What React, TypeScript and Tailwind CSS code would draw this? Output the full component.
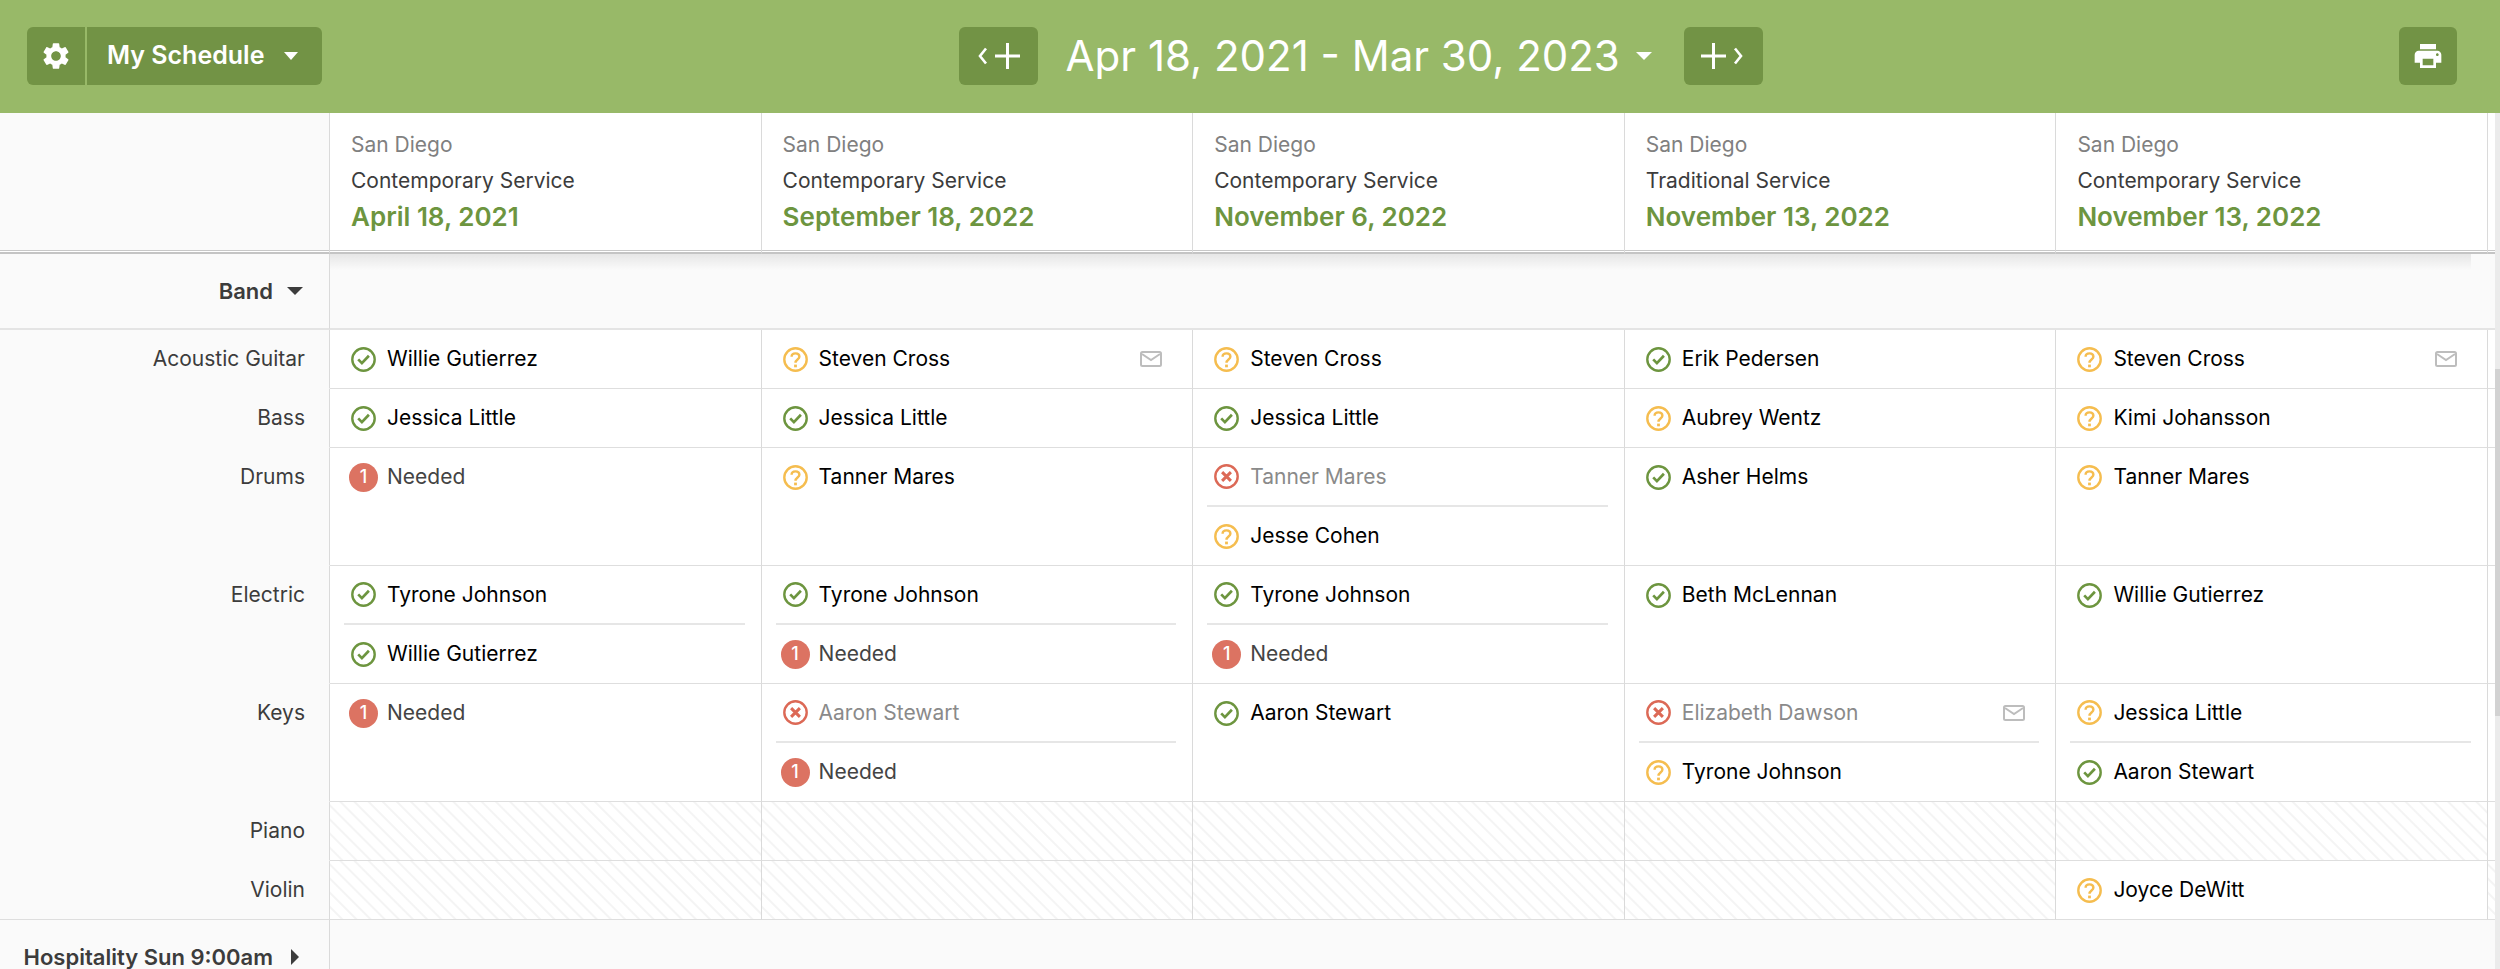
import type { ReactNode } from "react";
import { MdPrint, MdSettings } from "react-icons/md";

type Status = "confirmed" | "pending" | "declined" | "needed";

type Assignment = {
  status: Status;
  name: string;
  mail?: boolean;
};

type Position = {
  label: string;
  cells: Assignment[][];
  unusedNext?: boolean;
};

const yes = (name: string): Assignment => ({ status: "confirmed", name });
const maybe = (name: string, mail = false): Assignment => ({ status: "pending", name, mail });
const no = (name: string, mail = false): Assignment => ({ status: "declined", name, mail });
const needed: Assignment = { status: "needed", name: "Needed" };

const plans = [
  { campus: "San Diego", service: "Contemporary Service", date: "April 18, 2021" },
  { campus: "San Diego", service: "Contemporary Service", date: "September 18, 2022" },
  { campus: "San Diego", service: "Contemporary Service", date: "November 6, 2022" },
  { campus: "San Diego", service: "Traditional Service", date: "November 13, 2022" },
  { campus: "San Diego", service: "Contemporary Service", date: "November 13, 2022" },
];

const positions: Position[] = [
  {
    label: "Acoustic Guitar",
    cells: [
      [yes("Willie Gutierrez")],
      [maybe("Steven Cross", true)],
      [maybe("Steven Cross")],
      [yes("Erik Pedersen")],
      [maybe("Steven Cross", true)],
    ],
  },
  {
    label: "Bass",
    cells: [
      [yes("Jessica Little")],
      [yes("Jessica Little")],
      [yes("Jessica Little")],
      [maybe("Aubrey Wentz")],
      [maybe("Kimi Johansson")],
    ],
  },
  {
    label: "Drums",
    cells: [
      [needed],
      [maybe("Tanner Mares")],
      [no("Tanner Mares"), maybe("Jesse Cohen")],
      [yes("Asher Helms")],
      [maybe("Tanner Mares")],
    ],
  },
  {
    label: "Electric",
    cells: [
      [yes("Tyrone Johnson"), yes("Willie Gutierrez")],
      [yes("Tyrone Johnson"), needed],
      [yes("Tyrone Johnson"), needed],
      [yes("Beth McLennan")],
      [yes("Willie Gutierrez")],
    ],
  },
  {
    label: "Keys",
    cells: [
      [needed],
      [no("Aaron Stewart"), needed],
      [yes("Aaron Stewart")],
      [no("Elizabeth Dawson", true), maybe("Tyrone Johnson")],
      [maybe("Jessica Little"), yes("Aaron Stewart")],
    ],
  },
  { label: "Piano", cells: [[], [], [], [], []] },
  { label: "Violin", cells: [[], [], [], [], [maybe("Joyce DeWitt")]], unusedNext: true },
];

const hatch =
  "bg-[repeating-linear-gradient(45deg,#ffffff_0px,#ffffff_7px,#f4f4f4_8px,#f4f4f4_9px,#ffffff_10px)]";

const headRule = "border-b-2 border-b-[#c4c4c4] shadow-[inset_0_-1px_#ffffff,inset_0_-2px_#c8c8c8]";

const CaretDown = ({ className }: { className: string }) => (
  <svg
    viewBox="0 0 16 8"
    preserveAspectRatio="none"
    className={className}
    fill="currentColor"
    aria-hidden="true"
  >
    <path d="M0 0h16L8 8z" />
  </svg>
);

const StatusIcon = ({ status }: { status: Status }) => {
  if (status === "needed") {
    return (
      <span className="-mx-0.5 flex size-[29px] shrink-0 items-center justify-center rounded-full bg-[#dc7362] text-lg font-medium text-white">
        1
      </span>
    );
  }

  const color = {
    confirmed: "text-[#6d953f]",
    pending: "text-[#f5bd4f]",
    declined: "text-[#dc6956]",
  }[status];

  return (
    <svg
      viewBox="0 0 25 25"
      className={`size-[25px] shrink-0 ${color}`}
      fill="none"
      stroke="currentColor"
      strokeWidth="2.4"
      aria-hidden="true"
    >
      <circle cx="12.5" cy="12.5" r="11.2" />
      {status === "confirmed" && <path d="M7.2 12.4l3.7 3.7 7-7.4" strokeWidth="2.7" />}
      {status === "pending" && (
        <>
          <path d="M8.6 9.8c0-2 1.6-3.4 3.9-3.4s3.9 1.4 3.9 3.3c0 2.7-3.9 2.9-3.9 6" />
          <path d="M12.5 17.6v2.7" strokeWidth="2.8" />
        </>
      )}
      {status === "declined" && <path d="M8.1 8.1l8.8 8.8M16.9 8.1l-8.8 8.8" strokeWidth="3" />}
    </svg>
  );
};

const MailIcon = () => (
  <svg
    viewBox="0 0 22 16"
    className="ml-auto h-4 w-[22px] shrink-0 text-[#bdbdbd]"
    fill="none"
    stroke="currentColor"
    strokeWidth="2"
    aria-label="Email sent"
  >
    <rect x="1" y="1" width="20" height="14" rx="1.5" />
    <path d="M2 3l9 6 9-6" />
  </svg>
);

const AssignmentRow = ({ status, name, mail }: Assignment) => {
  const tone =
    status === "declined" ? "text-[#8a8a8a]" : status === "needed" ? "text-[#444444]" : "text-black";

  return (
    <li className="mr-4 ml-3.5 flex h-[59px] items-center gap-[11px] border-b-2 border-[#e6e6e6] pr-3.5 pl-[7px] last:h-[58px] last:border-b-0">
      <StatusIcon status={status} />
      <span className={tone}>{name}</span>
      {mail && <MailIcon />}
    </li>
  );
};

const GroupRow = ({ label, caret }: { label: string; caret: ReactNode }) => (
  <tr className="h-[76px] bg-[#fafafa]">
    <th
      scope="rowgroup"
      className="border-r border-b-2 border-r-[#dadada] border-b-[#e4e4e4] pr-[26px] text-right text-[22px] font-semibold"
    >
      <button type="button" className="inline-flex items-center gap-3.5 whitespace-nowrap">
        {label}
        <span className="flex w-4 justify-center">{caret}</span>
      </button>
    </th>
    <td colSpan={plans.length + 1} className="border-b-2 border-[#e4e4e4]" />
  </tr>
);

const TopBar = () => (
  <header className="flex h-[113px] shrink-0 items-center justify-between bg-[#98b968] pr-[43px] pb-0.5 pl-[27px] text-white">
    <div className="flex gap-0.5">
      <button
        type="button"
        aria-label="Settings"
        className="flex size-[58px] items-center justify-center rounded-l-md bg-[#729345]"
      >
        <MdSettings className="size-8" />
      </button>
      <button
        type="button"
        className="flex h-[58px] items-center gap-5 rounded-r-md bg-[#729345] pr-6 pl-5 text-[25px] font-semibold"
      >
        My Schedule
        <CaretDown className="h-2 w-3.5" />
      </button>
    </div>
    <div className="flex items-center gap-7">
      <button
        type="button"
        aria-label="Add earlier plans"
        className="flex h-[58px] w-[79px] items-center justify-center rounded-md bg-[#729345]"
      >
        <svg viewBox="0 0 44 26" className="h-[26px] w-11" fill="none" stroke="currentColor" strokeWidth="3">
          <path d="M10 5.5l-6 7.5 6 7.5" strokeWidth="2.6" />
          <path d="M31.5 0v26M19 13h25" />
        </svg>
      </button>
      <button type="button" className="flex items-center gap-4 pr-1 text-[42px]">
        Apr 18, 2021 - Mar 30, 2023
        <CaretDown className="h-2 w-4" />
      </button>
      <button
        type="button"
        aria-label="Add later plans"
        className="flex h-[58px] w-[79px] items-center justify-center rounded-md bg-[#729345]"
      >
        <svg viewBox="0 0 44 26" className="h-[26px] w-11" fill="none" stroke="currentColor" strokeWidth="3">
          <path d="M34 5.5l6 7.5-6 7.5" strokeWidth="2.6" />
          <path d="M12.5 0v26M0 13h25" />
        </svg>
      </button>
    </div>
    <button
      type="button"
      aria-label="Print"
      className="flex size-[58px] items-center justify-center rounded-md bg-[#729345]"
    >
      <MdPrint className="size-8" />
    </button>
  </header>
);

const App = () => {
  return (
    <div className="flex h-screen flex-col overflow-hidden bg-[#fafafa] font-[Inter,sans-serif] text-[21px] text-[#3c3c3c]">
      <TopBar />
      <main className="flex min-h-0 flex-1">
        <div className="relative min-w-0 flex-1 overflow-hidden">
          <table className="w-full table-fixed border-separate border-spacing-0">
            <colgroup>
              <col className="w-[330px]" />
              {plans.map((_, i) => (
                <col key={i} />
              ))}
              <col className="w-[7px]" />
            </colgroup>
            <thead>
              <tr className="h-[141px]">
                <td className={`border-r border-r-[#dadada] ${headRule}`} />
                {plans.map((plan, i) => (
                  <th
                    key={i}
                    scope="col"
                    className={`border-r border-r-[#dadada] bg-white px-[21px] pt-3.5 text-left align-top font-normal ${headRule}`}
                  >
                    <div className="leading-9 text-[#808080]">{plan.campus}</div>
                    <div className="leading-9">{plan.service}</div>
                    <a href="#plan" className="block text-[26px] leading-9 font-semibold text-[#6d953f]">
                      {plan.date}
                    </a>
                  </th>
                ))}
                <td className={`bg-white ${headRule}`} />
              </tr>
            </thead>
            <tbody>
              <GroupRow label="Band" caret={<CaretDown className="h-2 w-4" />} />
              {positions.map((position) => (
                <tr key={position.label} className="group">
                  <th
                    scope="row"
                    className="border-r border-b border-r-[#dadada] border-b-transparent pr-6 text-right align-top font-normal group-nth-last-2:border-b-[#dedede]"
                  >
                    <div className="leading-[58px]">{position.label}</div>
                  </th>
                  {position.cells.map((people, i) => (
                    <td
                      key={i}
                      className={`border-r border-b border-r-[#dadada] border-b-[#dedede] p-0 align-top ${
                        people.length ? "bg-white" : hatch
                      }`}
                    >
                      <ul>
                        {people.map((person, j) => (
                          <AssignmentRow key={j} {...person} />
                        ))}
                      </ul>
                    </td>
                  ))}
                  <td className={`border-b border-[#dedede] ${position.unusedNext ? hatch : "bg-white"}`} />
                </tr>
              ))}
              <GroupRow
                label="Hospitality Sun 9:00am"
                caret={
                  <svg viewBox="0 0 8 16" className="h-4 w-2" fill="currentColor" aria-hidden="true">
                    <path d="M0 0l8 8-8 8z" />
                  </svg>
                }
              />
            </tbody>
          </table>
          <div className="pointer-events-none absolute top-[141px] right-6 left-[330px] h-4 bg-linear-to-b from-black/8 to-transparent" />
        </div>
        <div className="w-[5px] shrink-0 bg-[#ebebeb]">
          <div className="mt-64 h-[347px] bg-[#d2d2d2]" />
        </div>
      </main>
    </div>
  );
};

export default App;
